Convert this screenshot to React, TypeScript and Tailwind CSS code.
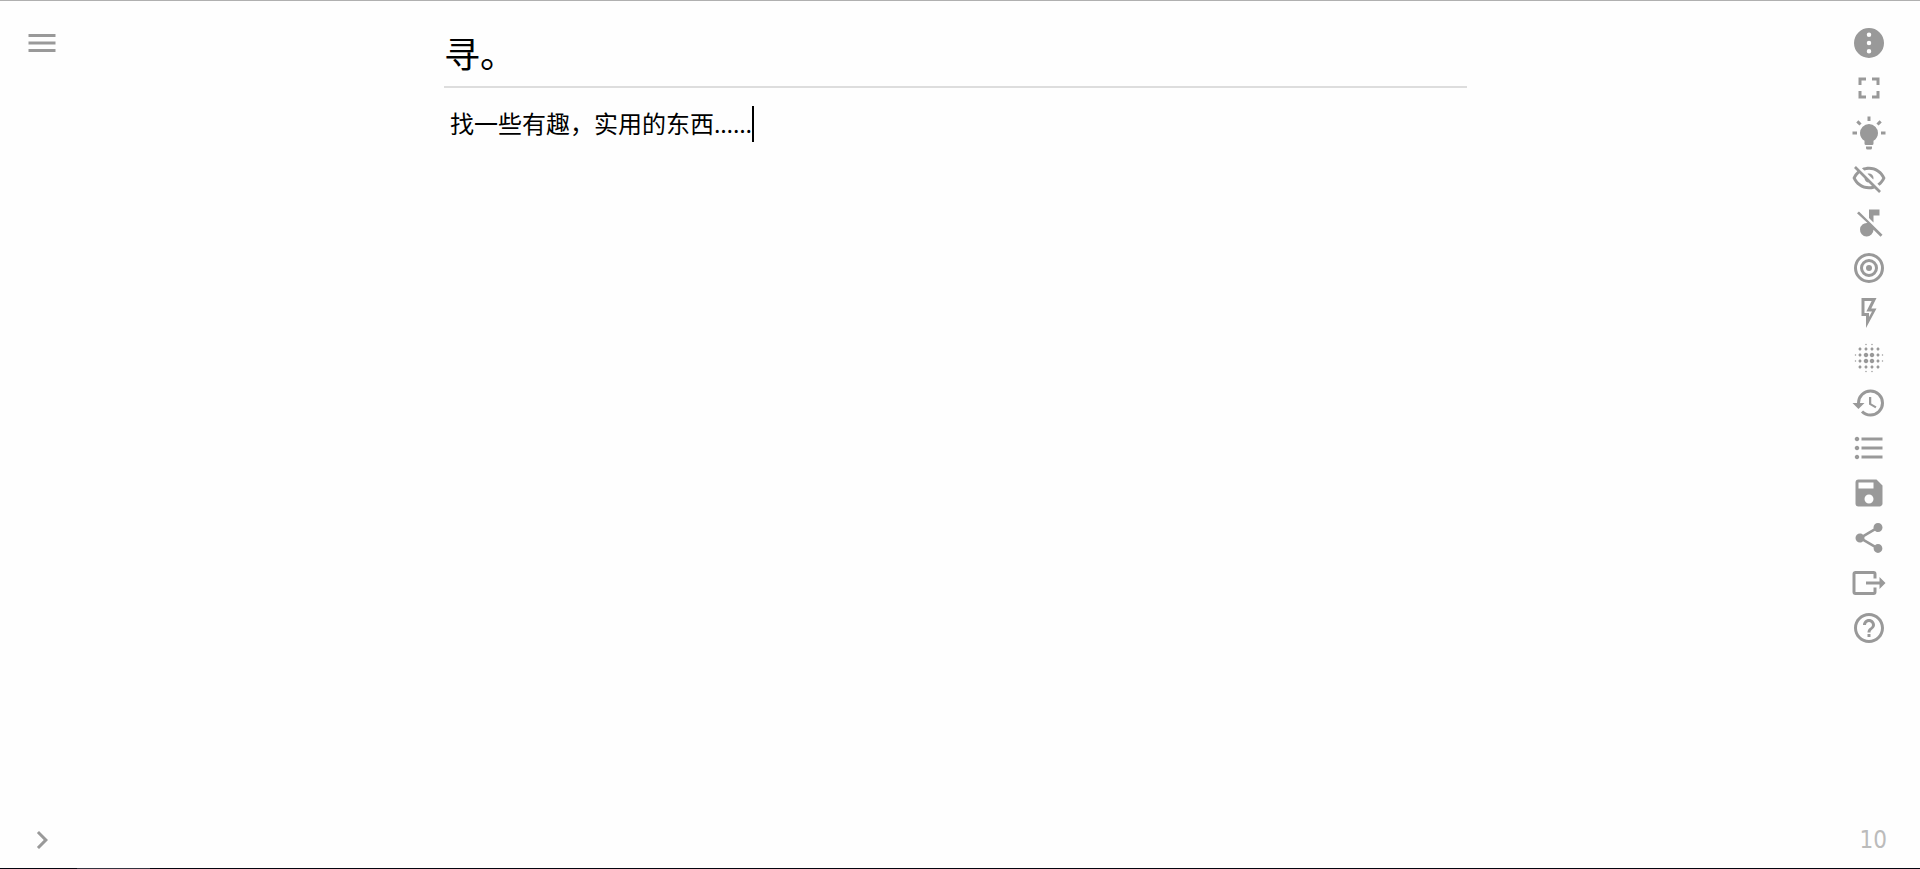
import { useState, type ReactNode } from 'react';
import {
  MdBlurOn,
  MdChevronRight,
  MdFormatListBulleted,
  MdFullscreen,
  MdHelpOutline,
  MdMenu,
  MdSave,
  MdShare,
} from 'react-icons/md';

function Glyph({ d }: { d: string }) {
  return (
    <svg viewBox="0 0 24 24" fill="currentColor" className="size-9" aria-hidden="true">
      <path d={d} />
    </svg>
  );
}

function Bullseye() {
  return (
    <svg viewBox="0 0 24 24" fill="none" stroke="currentColor" strokeWidth="2" className="size-9" aria-hidden="true">
      <circle cx="12" cy="12" r="9" />
      <circle cx="12" cy="12" r="5" />
      <circle cx="12" cy="12" r="2" fill="currentColor" stroke="none" />
    </svg>
  );
}

const paths = {
  more: 'M12 2A10 10 0 1 0 12 22A10 10 0 1 0 12 2M12 5A1.5 1.5 0 1 1 12 8A1.5 1.5 0 1 1 12 5M12 10.5A1.5 1.5 0 1 1 12 13.5A1.5 1.5 0 1 1 12 10.5M12 16A1.5 1.5 0 1 1 12 19A1.5 1.5 0 1 1 12 16Z',
  light: 'M12,6A6,6 0 0,1 18,12C18,14.22 16.79,16.16 15,17.2V19A1,1 0 0,1 14,20H10A1,1 0 0,1 9,19V17.2C7.21,16.16 6,14.22 6,12A6,6 0 0,1 12,6M14,21V22A1,1 0 0,1 13,23H11A1,1 0 0,1 10,22V21H14M20,11H23V13H20V11M1,11H4V13H1V11M13,1V4H11V1H13M4.92,3.5L7.05,5.64L5.63,7.05L3.5,4.93L4.92,3.5M16.95,5.63L19.07,3.5L20.5,4.93L18.37,7.05L16.95,5.63Z',
  eyeOff: 'M2,5.27L3.28,4L20,20.72L18.73,22L15.65,18.92C14.5,19.3 13.28,19.5 12,19.5C7,19.5 2.73,16.39 1,12C1.69,10.24 2.79,8.69 4.19,7.46L2,5.27M12,9A3,3 0 0,1 15,12C15,12.35 14.94,12.69 14.83,13L11,9.17C11.31,9.06 11.65,9 12,9M12,4.5C17,4.5 21.27,7.61 23,12C22.18,14.08 20.79,15.88 19,17.19L17.58,15.76C18.94,14.82 20.06,13.54 20.82,12C19.17,8.64 15.76,6.5 12,6.5C10.91,6.5 9.84,6.68 8.84,7L7.3,5.47C8.74,4.85 10.33,4.5 12,4.5M3.18,12C4.83,15.36 8.24,17.5 12,17.5C12.69,17.5 13.37,17.43 14,17.29L11.72,15C10.29,14.85 9.15,13.71 9,12.28L5.6,8.87C4.61,9.72 3.78,10.78 3.18,12Z',
  musicOff: 'M5.3,4.3L4,5.5L11,12.03A4.5,4.5 0 1,0 15,16.5L19.7,21.2L21,19.9L5.3,4.3M12,3V8.6L15,11.6V7H19V3H12Z',
  flash: 'M7,2H17L13.5,9H17L10,22V14H7V2M9,4V12H12V14.66L14,11H10.24L13.76,4H9Z',
  history: 'M13.5,8H12V13L16.28,15.54L17,14.33L13.5,12.25V8M13,3A9,9 0 0,0 4,12H1L4.96,16.03L9,12H6A7,7 0 0,1 13,5A7,7 0 0,1 20,12A7,7 0 0,1 13,19C11.07,19 9.32,18.21 8.06,16.94L6.64,18.36C8.27,20 10.5,21 13,21A9,9 0 0,0 22,12A9,9 0 0,0 13,3',
  exit: 'M23,12L19,8V11H10V13H19V16M1,18V6C1,4.89 1.9,4 3,4H15A2,2 0 0,1 17,6V9H15V6H3V18H15V15H17V18A2,2 0 0,1 15,20H3A2,2 0 0,1 1,18Z',
};

const tools: { label: string; icon: ReactNode }[] = [
  { label: '更多', icon: <Glyph d={paths.more} /> },
  { label: '全屏', icon: <MdFullscreen className="size-9" /> },
  { label: '夜间模式', icon: <Glyph d={paths.light} /> },
  { label: '隐藏', icon: <Glyph d={paths.eyeOff} /> },
  { label: '音乐', icon: <Glyph d={paths.musicOff} /> },
  { label: '目标', icon: <Bullseye /> },
  { label: '闪电', icon: <Glyph d={paths.flash} /> },
  { label: '模糊', icon: <MdBlurOn className="size-9" /> },
  { label: '历史', icon: <Glyph d={paths.history} /> },
  { label: '列表', icon: <MdFormatListBulleted className="size-9" /> },
  { label: '保存', icon: <MdSave className="size-9" /> },
  { label: '分享', icon: <MdShare className="size-9" /> },
  { label: '导出', icon: <Glyph d={paths.exit} /> },
  { label: '帮助', icon: <MdHelpOutline className="size-9" /> },
];

function IconButton({ label, children }: { label: string; children: ReactNode }) {
  return (
    <button type="button" aria-label={label} className="size-9 shrink-0 cursor-pointer">
      {children}
    </button>
  );
}

export default function App() {
  const [title, setTitle] = useState('寻。');
  const [body, setBody] = useState('找一些有趣，实用的东西……');

  return (
    <div className="flex h-screen flex-col border-t border-[#b0b0b0] bg-[#fefefe] font-['Noto_Sans','Noto_Sans_CJK_SC',sans-serif] text-black">
      <div className="flex min-h-0 flex-1">
        <nav className="flex flex-col justify-between pt-6 pb-2.5 pl-6 text-[#999999]">
          <IconButton label="菜单">
            <MdMenu className="size-9" />
          </IconButton>
          <IconButton label="展开">
            <MdChevronRight className="size-9" />
          </IconButton>
        </nav>

        <main className="min-w-0 flex-1 pt-6">
          <div className="mx-auto max-w-[1023px]">
            <input
              aria-label="标题"
              value={title}
              onChange={e => setTitle(e.target.value)}
              className="block h-[63px] w-full border-b-2 border-[#dddddd] pb-1.5 text-4xl outline-none"
            />
            <div className="flex items-end px-1.5 pt-[18px]">
              <textarea
                aria-label="正文"
                rows={1}
                value={body}
                onChange={e => setBody(e.target.value)}
                className="field-sizing-content resize-none overflow-hidden text-2xl/9 caret-transparent outline-none"
              />
              <span className="h-9 w-0.5 bg-black" />
            </div>
          </div>
        </main>

        <aside className="flex flex-col justify-between pt-6 pr-[33px] pb-2.5 text-[#999999]">
          <div className="flex flex-col gap-[9px]">
            {tools.map(t => (
              <IconButton key={t.label} label={t.label}>
                {t.icon}
              </IconButton>
            ))}
          </div>
          <span className="text-right font-['DejaVu_Sans_Condensed','Noto_Sans',sans-serif] text-2xl/9 text-[#bbbbbb]">
            {body.replace(/[，…]/g, '').length}
          </span>
        </aside>
      </div>
      <div className="h-px bg-[#05050f] pl-[77px]">
        <div className="h-px w-[73px] bg-[#33333f]" />
      </div>
    </div>
  );
}
